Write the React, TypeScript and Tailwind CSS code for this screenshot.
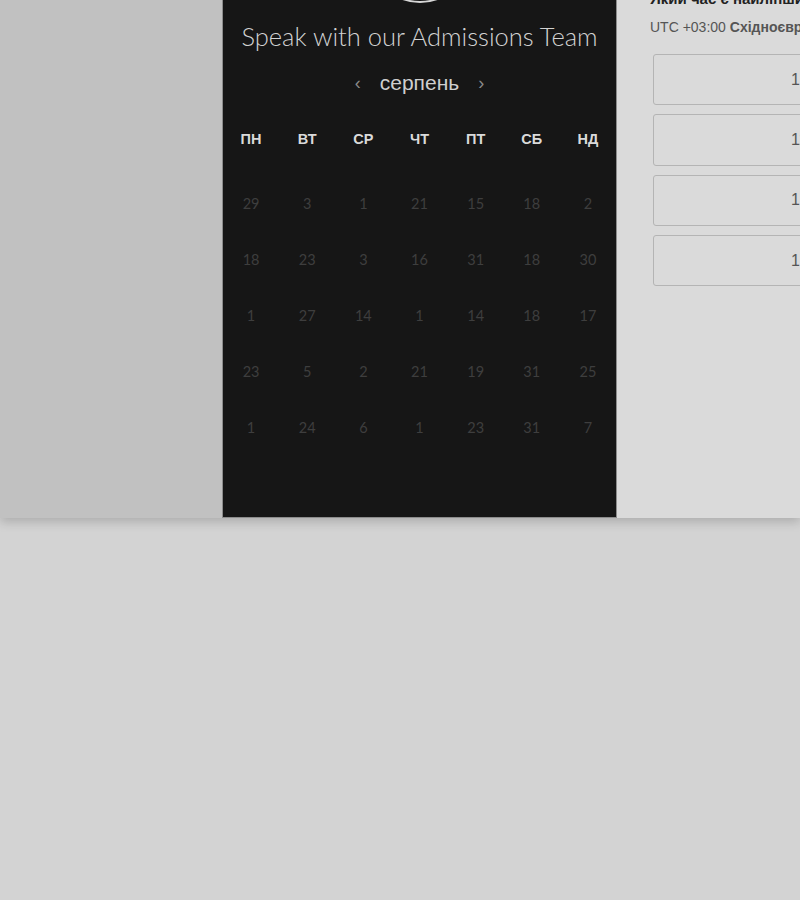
import React from 'react';

const weekDays = ['ПН', 'ВТ', 'СР', 'ЧТ', 'ПТ', 'СБ', 'НД'];

const weeks = [
    [29, 3, 1, 21, 15, 18, 2],
    [18, 23, 3, 16, 31, 18, 30],
    [1, 27, 14, 1, 14, 18, 17],
    [23, 5, 2, 21, 19, 31, 25],
    [1, 24, 6, 1, 23, 31, 7],
];

const slots = ['10:00', '11:00', '12:00', '13:00'];

const Calendar: React.FC = () => {
    return (
        <div className="w-[395px] shrink-0 bg-[#161616] border-x border-b border-[#8c8c8c] flex flex-col items-center">
            <div className="-mt-[97px] w-[100px] h-[100px] rounded-full border-2 border-[#d6d6d6] bg-[#161616]" />
            <h1 className="mt-[17px] h-[32px] leading-[32px] text-[25.5px] font-light text-[#d2d2d2] font-['Lato',sans-serif] whitespace-nowrap">
                Speak with our Admissions Team
            </h1>
            <div className="mt-[15px] h-[32px] flex items-center gap-[19px] font-['Liberation_Sans',sans-serif]">
                <span className="text-[18px] text-[#8a8a8a]">‹</span>
                <span className="text-[21px] text-[#cfcfcf]">серпень</span>
                <span className="text-[18px] text-[#8a8a8a]">›</span>
            </div>
            <div className="mt-[13px] w-[393px] grid grid-cols-7 h-[56px] items-center font-['Liberation_Sans',sans-serif]">
                {weekDays.map((d) => (
                    <div key={d} className="text-center text-[14.5px] font-bold text-[#dadada]">
                        {d}
                    </div>
                ))}
            </div>
            <div className="mt-[8px] w-[393px] flex flex-col font-['Lato',sans-serif]">
                {weeks.map((w, i) => (
                    <div key={i} className="grid grid-cols-7 h-[56px] items-center">
                        {w.map((n, j) => (
                            <div key={j} className="text-center text-[14.5px] text-[#3e3e3e]">
                                {n}
                            </div>
                        ))}
                    </div>
                ))}
            </div>
        </div>
    );
};

const TimePanel: React.FC = () => {
    return (
        <div className="flex-1 min-w-0 bg-[#dadada] pl-[33px] font-['Liberation_Sans',sans-serif] whitespace-nowrap">
            <div className="-mt-[11px] h-[20px] leading-[20px] text-[15px] font-bold text-[#222]">
                Який час є найліпшим для вас?
            </div>
            <div className="mt-[8px] h-[20px] leading-[20px] text-[14px] text-[#555]">
                UTC +03:00 <span className="font-bold">Східноєвропейський час</span>
            </div>
            <div className="mt-[17px] ml-[3px] flex flex-col gap-[9px]">
                {slots.map((s) => (
                    <div
                        key={s}
                        className="w-[286px] h-[51.3px] shrink-0 rounded-[3px] border border-[#b4b4b4] flex items-center pl-[137px] text-[16px] text-[#555]"
                    >
                        {s}
                    </div>
                ))}
            </div>
        </div>
    );
};

const App: React.FC = () => {
    return (
        <div className="w-[800px] h-[900px] overflow-hidden bg-[#d3d3d3]">
            <div className="h-[518px] flex overflow-hidden shadow-[0_4px_10px_rgba(0,0,0,0.18)] relative">
                <div className="w-[222px] shrink-0 bg-[#c1c1c1]" />
                <Calendar />
                <TimePanel />
            </div>
        </div>
    );
};

export default App;
